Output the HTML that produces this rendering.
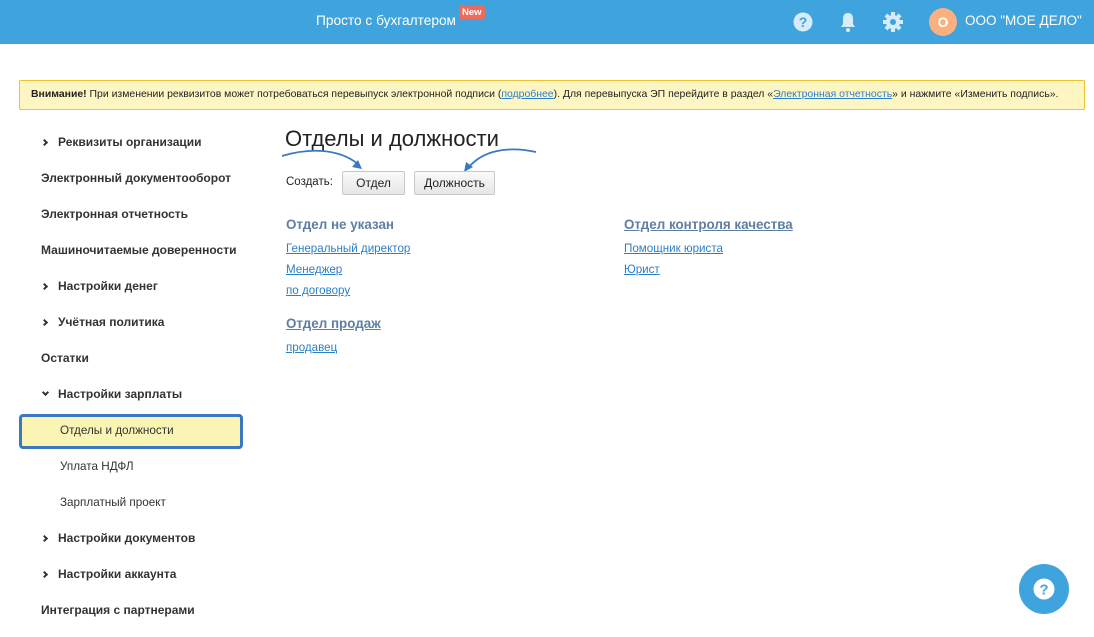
<!DOCTYPE html>
<html><head><meta charset="utf-8"><style>
*{margin:0;padding:0;box-sizing:border-box}
body{width:1094px;height:637px;overflow:hidden;background:#fff;font-family:"Liberation Sans",Arial,sans-serif;color:#333;position:relative}
.hdr{position:absolute;left:0;top:0;width:1094px;height:44px;background:#3fa3dd}
.a{position:absolute;white-space:nowrap}
.warn{position:absolute;left:19px;top:80px;width:1066px;height:30px;background:#fdf6c3;border:1px solid #efc42a;border-radius:2px;font-size:10.45px;line-height:28px;padding-left:11px;color:#222}
.warn u{color:#2a7fc9}
.side{font-size:12px;font-weight:bold;color:#333}
.sub{font-size:11.7px;color:#333;font-weight:normal}
.chev{position:absolute;width:5px;height:5px;border-right:2px solid #333;border-bottom:2px solid #333}
.btn{position:absolute;height:24px;border:1px solid #c8c8c8;border-radius:2px;background:linear-gradient(#fafafa,#e6e6e6);font-size:12px;line-height:22px;text-align:center;color:#222}
.h{font-size:13.4px;font-weight:bold;color:#5e7fa3}
.l{font-size:11.6px;color:#2a7fc9;text-decoration:underline}
</style></head><body>
<div class="hdr"></div>
<div class="a" style="left:316px;top:13px;color:#fff;font-size:13.7px">Просто с бухгалтером</div>
<div class="a" style="left:459px;top:6px;background:#ef6a5a;color:#fff;font-size:9.5px;font-weight:bold;padding:1px 3px;border-radius:2px">New</div>
<svg class="a" style="left:793px;top:12px" width="20" height="20"><circle cx="10" cy="10" r="9.5" fill="#d7ecf8"/><text x="10" y="15" font-size="14" font-weight="bold" text-anchor="middle" fill="#3fa3dd" font-family="Liberation Sans">?</text></svg>
<svg class="a" style="left:839px;top:11px" width="18" height="22"><path d="M9 2c-4 0-5 3-5 6v5l-2 3h14l-2-3V8c0-3-1-6-5-6z" fill="#d7ecf8"/><circle cx="9" cy="19" r="2" fill="#d7ecf8"/></svg>
<svg class="a" style="left:883px;top:12px" width="20" height="20"><g fill="#d7ecf8" transform="translate(10 10)"><circle r="7"/><g id="t"><rect x="-2" y="-10" width="4" height="20"/></g><use href="#t" transform="rotate(45)"/><use href="#t" transform="rotate(90)"/><use href="#t" transform="rotate(135)"/></g><circle cx="10" cy="10" r="3" fill="#3fa3dd"/></svg>
<div class="a" style="left:929px;top:8px;width:28px;height:28px;border-radius:50%;background:#fbb07f;color:#fff;font-weight:bold;font-size:14px;text-align:center;line-height:28px">О</div>
<div class="a" style="left:965px;top:13px;color:#fff;font-size:13.5px">ООО "МОЕ ДЕЛО"</div>

<div class="warn"><b>Внимание!</b> При изменении реквизитов может потребоваться перевыпуск электронной подписи (<u>подробнее</u>). Для перевыпуска ЭП перейдите в раздел «<u>Электронная отчетность</u>» и нажмите «Изменить подпись».</div>

<div class="chev" style="left:42px;top:140px;transform:rotate(-45deg)"></div>
<div class="a side" style="left:58px;top:135px">Реквизиты организации</div>
<div class="a side" style="left:41px;top:171px">Электронный документооборот</div>
<div class="a side" style="left:41px;top:207px">Электронная отчетность</div>
<div class="a side" style="left:41px;top:243px">Машиночитаемые доверенности</div>
<div class="chev" style="left:42px;top:284px;transform:rotate(-45deg)"></div>
<div class="a side" style="left:58px;top:279px">Настройки денег</div>
<div class="chev" style="left:42px;top:320px;transform:rotate(-45deg)"></div>
<div class="a side" style="left:58px;top:315px">Учётная политика</div>
<div class="a side" style="left:41px;top:351px">Остатки</div>
<div class="chev" style="left:43px;top:390px;transform:rotate(45deg)"></div>
<div class="a side" style="left:58px;top:387px">Настройки зарплаты</div>
<div class="a" style="left:19px;top:414px;width:224px;height:35px;border:3px solid #3a78c3;border-radius:4px;background:#faf5b4"></div>
<div class="a sub" style="left:60px;top:424px">Отделы и должности</div>
<div class="a sub" style="left:60px;top:460px">Уплата НДФЛ</div>
<div class="a sub" style="left:60px;top:496px">Зарплатный проект</div>
<div class="chev" style="left:42px;top:536px;transform:rotate(-45deg)"></div>
<div class="a side" style="left:58px;top:531px">Настройки документов</div>
<div class="chev" style="left:42px;top:572px;transform:rotate(-45deg)"></div>
<div class="a side" style="left:58px;top:567px">Настройки аккаунта</div>
<div class="a side" style="left:41px;top:603px">Интеграция с партнерами</div>

<div class="a" style="left:285px;top:126px;font-size:22px;color:#222">Отделы и должности</div>
<svg class="a" style="left:278px;top:140px" width="270" height="36"><g fill="none" stroke="#3a78c3" stroke-width="1.8"><path d="M4 16C30 8 60 8 80 24"/><path d="M258 12C230 6 205 10 190 28"/></g><path d="M84 29l-10-2 6-7z" fill="#3a78c3"/><path d="M186 32l2-10 7 5z" fill="#3a78c3"/></svg>
<div class="a" style="left:286px;top:176px;font-size:11.5px;color:#222">Создать:</div>
<div class="btn" style="left:342px;top:171px;width:63px">Отдел</div>
<div class="btn" style="left:414px;top:171px;width:81px">Должность</div>

<div class="a h" style="left:286px;top:217px">Отдел не указан</div>
<div class="a l" style="left:286px;top:242px">Генеральный директор</div>
<div class="a l" style="left:286px;top:263px">Менеджер</div>
<div class="a l" style="left:286px;top:284px">по договору</div>
<div class="a h" style="left:286px;top:316px;text-decoration:underline">Отдел продаж</div>
<div class="a l" style="left:286px;top:341px">продавец</div>
<div class="a h" style="left:624px;top:217px;text-decoration:underline">Отдел контроля качества</div>
<div class="a l" style="left:624px;top:242px">Помощник юриста</div>
<div class="a l" style="left:624px;top:263px">Юрист</div>

<div class="a" style="left:1019px;top:564px;width:50px;height:50px;border-radius:50%;background:#3fa3dd"></div>
<svg class="a" style="left:1033px;top:578px" width="22" height="22"><circle cx="11" cy="11" r="10.5" fill="#fff"/><text x="11" y="16.5" font-size="15" font-weight="bold" text-anchor="middle" fill="#3fa3dd" font-family="Liberation Sans">?</text></svg>
</body></html>
